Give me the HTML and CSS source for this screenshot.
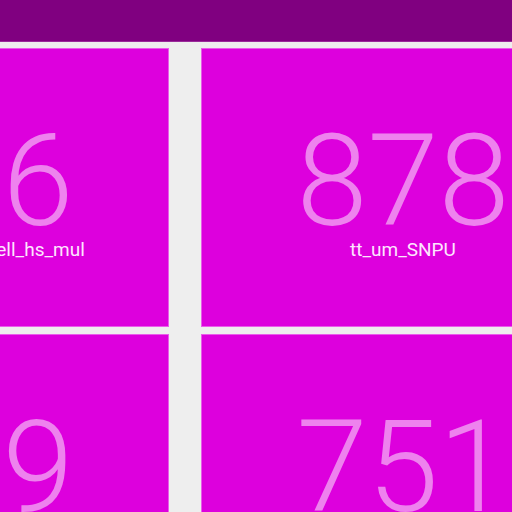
FILE: index.html
```html
<!DOCTYPE html>
<html>
<head>
<meta charset="utf-8">
<link rel="stylesheet" href="styles.css">
</head>
<body>
<header class="topbar"></header>
<main class="grid">
  <div class="card"><div class="num">266</div><div class="label">tt_um_example_cell_hs_mul</div></div>
  <div class="card"><div class="num">878</div><div class="label">tt_um_SNPU</div></div>
  <div class="card"><div class="num">329</div><div class="label">tt_um_example_project</div></div>
  <div class="card"><div class="num">751</div><div class="label">tt_um_design</div></div>
</main>
</body>
</html>
```
FILE: styles.css
```css
html, body {
  margin: 0;
  padding: 0;
  background: #eeeeee;
  overflow: hidden;
  width: 512px;
  height: 512px;
  font-family: Roboto, "Noto Sans", sans-serif;
}
.topbar {
  height: 41px;
  background: #800080;
  border-bottom: 1px solid #9a2a9a;
}
.grid {
  display: grid;
  grid-template-columns: 404px 404px;
  column-gap: 32px;
  row-gap: 7px;
  margin-left: -235px;
  margin-top: 6px;
  width: 840px;
}
.card {
  height: 201px;
  background: #dd00dd;
  border: 1px solid #ea5cea;
  display: flex;
  flex-direction: column;
  align-items: center;
  padding-top: 76px;
  box-sizing: content-box;
}
.num {
  font-size: 128px;
  font-weight: 300;
  line-height: 112px;
  color: #ee82ee;
}
.label {
  font-size: 19px;
  line-height: 25px;
  color: #fde6fd;
}
```
